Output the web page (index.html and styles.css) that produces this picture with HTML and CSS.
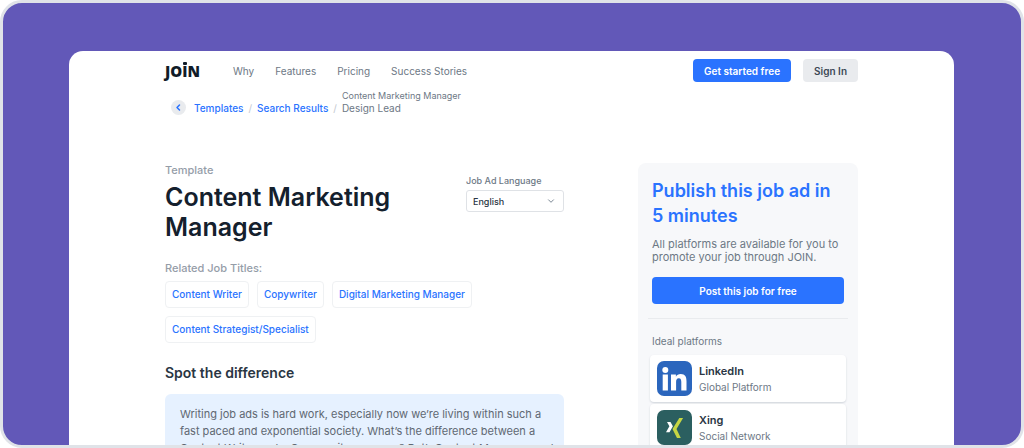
FILE: index.html
```html
<!DOCTYPE html>
<html lang="en">
<head>
<meta charset="utf-8">
<meta name="viewport" content="width=device-width, initial-scale=1">
<title>Content Marketing Manager – JOIN</title>
<link rel="stylesheet" href="styles.css">
</head>
<body>
<div class="frame">
  <div class="page">
    <header class="header">
      <a class="logo" href="#">JO<span class="logo-i">I</span>N</a>
      <nav class="nav">
        <a href="#">Why</a>
        <a href="#">Features</a>
        <a href="#">Pricing</a>
        <a href="#">Success Stories</a>
      </nav>
      <div class="actions">
        <button class="btn btn-primary" type="button">Get started free</button>
        <button class="btn btn-muted" type="button">Sign In</button>
      </div>
    </header>

    <nav class="crumbs" aria-label="Breadcrumb">
      <button class="back" type="button" aria-label="Back">
        <svg width="15" height="15" viewBox="0 0 15 15" fill="none" stroke="#2a73ff" stroke-width="1.5" stroke-linecap="round" stroke-linejoin="round"><path d="M8.500 5 6 7.500 8.500 10"/></svg>
      </button>
      <a href="#">Templates</a>
      <span class="slash">/</span>
      <a href="#">Search Results</a>
      <span class="slash">/</span>
      <span class="current"><small>Content Marketing Manager</small>Design Lead</span>
    </nav>

    <div class="columns">
      <main class="main">
        <div class="intro">
          <div class="intro-title">
            <p class="label">Template</p>
            <h1>Content Marketing Manager</h1>
          </div>
          <div class="language">
            <label for="language">Job Ad Language</label>
            <div class="select-wrap">
              <select id="language"><option>English</option></select>
              <svg class="chevron" width="8" height="8" viewBox="0 0 8 8" fill="none" stroke="#7b8794" stroke-linecap="round" stroke-linejoin="round"><path d="M1.500 2.800 4 5.300l2.500-2.500"/></svg>
            </div>
          </div>
        </div>
        <p class="label">Related Job Titles:</p>
        <div class="chips">
          <a href="#">Content Writer</a>
          <a href="#">Copywriter</a>
          <a href="#">Digital Marketing Manager</a>
          <a href="#">Content Strategist/Specialist</a>
        </div>
        <h2 class="section-title">Spot the difference</h2>
        <div class="note">
          Writing job ads is hard work, especially now we’re living within such a<br>
          fast paced and exponential society. What’s the difference between a<br>
          Content Writer and a Community manager? Both Content Managers and
        </div>
      </main>

      <aside class="sidebar">
        <h2>Publish this job ad in 5 minutes</h2>
        <p class="pitch">All platforms are available for you to promote your job through JOIN.</p>
        <button class="btn btn-primary btn-wide" type="button">Post this job for free</button>
        <hr>
        <p class="platforms-label">Ideal platforms</p>
        <div class="platforms">
          <div class="platform">
            <svg width="35" height="35" viewBox="0 0 35 35" aria-hidden="true">
              <rect width="35" height="35" rx="7" fill="#2b66bd"/>
              <g fill="#fff">
                <circle cx="8.300" cy="9" r="3"/>
                <rect x="5.700" y="13.500" width="5.200" height="16"/>
                <path d="M14 13.500h4.900v2.200c.8-1.500 2.600-2.600 4.800-2.600 4.600 0 5.800 3 5.800 7.200v9.200h-5.200v-8.200c0-2.200-.3-4-2.500-4s-2.700 1.700-2.700 3.900v8.300H14z"/>
              </g>
            </svg>
            <div><h3>LinkedIn</h3><p>Global Platform</p></div>
          </div>
          <div class="platform">
            <svg width="35" height="35" viewBox="0 0 35 35" aria-hidden="true">
              <rect width="35" height="35" rx="7" fill="#2b5f60"/>
              <path fill="#fff" d="M10 12h3.500l2.400 4.300-3.400 6H9l3.400-6z"/>
              <path fill="#c6d643" d="M22.300 8h3.800l-6.600 11 4.300 9H20l-4.500-9z"/>
            </svg>
            <div><h3>Xing</h3><p>Social Network</p></div>
          </div>
        </div>
      </aside>
    </div>
  </div>
</div>
</body>
</html>
```
FILE: styles.css
```css
* { box-sizing: border-box; }

body {
  margin: 0;
  background: #fff;
  font-family: Inter, "Liberation Sans", sans-serif;
  font-size: 11px;
  color: #6d7885;
}

h1, h2, h3, p { margin: 0; }
a { text-decoration: none; }
button, select { font: inherit; }

.frame {
  height: 100vh;
  overflow: hidden;
  padding: 48px 67px 0 66px;
  border: 3px solid #e0e3e8;
  border-radius: 22px;
  background: #6258b8;
}

.page {
  min-height: 100%;
  padding: 8px 96px 0;
  border-radius: 14px 14px 0 0;
  background: #fff;
}

.header { display: flex; align-items: center; height: 23px; }

.logo {
  width: 68px;
  font: 800 15px/22px "Open Sans", sans-serif;
  color: #101c28;
}
.logo-i { position: relative; }
.logo-i::before {
  content: "";
  position: absolute;
  top: 1px;
  left: 1px;
  width: 4px;
  height: 3px;
  border-radius: 1px;
  background: #101c28;
}

.nav { display: flex; gap: 21px; font-size: 10px; }
.nav a { color: #6d7885; }

.actions { display: flex; gap: 12px; margin-left: auto; }

.btn {
  height: 23px;
  padding: 0 11px;
  border: 0;
  border-radius: 4px;
  font-size: 10px;
  font-weight: 600;
}
.btn-primary { background: #2a73ff; color: #fff; }
.btn-muted { background: #e9ebee; color: #3c4856; }
.btn-wide { width: 100%; height: 27px; }

.crumbs {
  display: flex;
  align-items: flex-end;
  gap: 5px;
  margin-top: 8px;
  padding-left: 6px;
  font-size: 10px;
  line-height: 12px;
}
.crumbs a { color: #2a73ff; font-weight: 500; }
.back {
  width: 15px;
  height: 15px;
  margin: 0 3px -1px 0;
  padding: 0;
  border: 0;
  border-radius: 50%;
  background: #e9ebee;
}
.back svg { display: block; }
.slash { color: #c3c8cf; }
.current small { display: block; font-size: 9px; }

.columns {
  display: flex;
  justify-content: space-between;
  align-items: flex-start;
  gap: 48px;
  margin-top: 49px;
}
.main { flex: 0 1 399px; min-width: 0; }
.intro { display: flex; justify-content: space-between; height: 98px; }
.intro-title { flex: 0 1 260px; }
.label { font-weight: 500; line-height: 14px; color: #959da8; }
h1 {
  margin-top: 5px;
  font-size: 25px;
  font-weight: 600;
  line-height: 30px;
  color: #14202d;
}

.language { width: 98px; padding-top: 12px; font-size: 9px; font-weight: 500; }
.language label { display: block; line-height: 12px; }
.select-wrap { position: relative; margin-top: 3px; }
.select-wrap select {
  width: 100%;
  height: 22px;
  padding: 0 6px;
  border: 1px solid #dfe2e6;
  border-radius: 3px;
  appearance: none;
  background: #fff;
  color: #2a3643;
}
.chevron { position: absolute; top: 7px; right: 9px; pointer-events: none; }

.chips { display: flex; flex-wrap: wrap; gap: 8px; margin-top: 6px; }
.chips a {
  padding: 6px;
  border: 1px solid #eff1f3;
  border-radius: 4px;
  font-size: 10px;
  font-weight: 500;
  line-height: 13px;
  color: #2a73ff;
}

.section-title {
  margin-top: 20px;
  font-size: 14px;
  font-weight: 600;
  line-height: 20px;
  color: #2a3643;
}
.note {
  margin-top: 11px;
  padding: 12px 15px;
  border-radius: 6px;
  background: #e6f1ff;
  line-height: 17px;
  white-space: nowrap;
  color: #606872;
}

.sidebar {
  flex: 0 0 220px;
  min-height: 320px;
  padding: 15px 14px 0;
  border-radius: 8px;
  background: #f7f8fa;
}
.sidebar h2 {
  font-size: 18px;
  font-weight: 600;
  line-height: 25px;
  color: #2a73ff;
}
.pitch { margin: 10px 0 13px; line-height: 13px; }
.sidebar hr {
  height: 1px;
  margin: 14px -4px 16px;
  border: 0;
  background: #e9ebee;
}
.platforms-label { font-size: 10px; line-height: 12px; }
.platforms { display: grid; gap: 2px; margin: 8px -2px 0; }
.platform {
  display: flex;
  align-items: center;
  gap: 7px;
  height: 47px;
  padding: 0 7px;
  border-radius: 4px;
  background: #fff;
  box-shadow: 0 1px 2px #cfd4da;
}
.platform h3 { font-size: 11px; font-weight: 600; line-height: 16px; color: #2a3643; }
.platform p { font-size: 10px; line-height: 16px; }
```
